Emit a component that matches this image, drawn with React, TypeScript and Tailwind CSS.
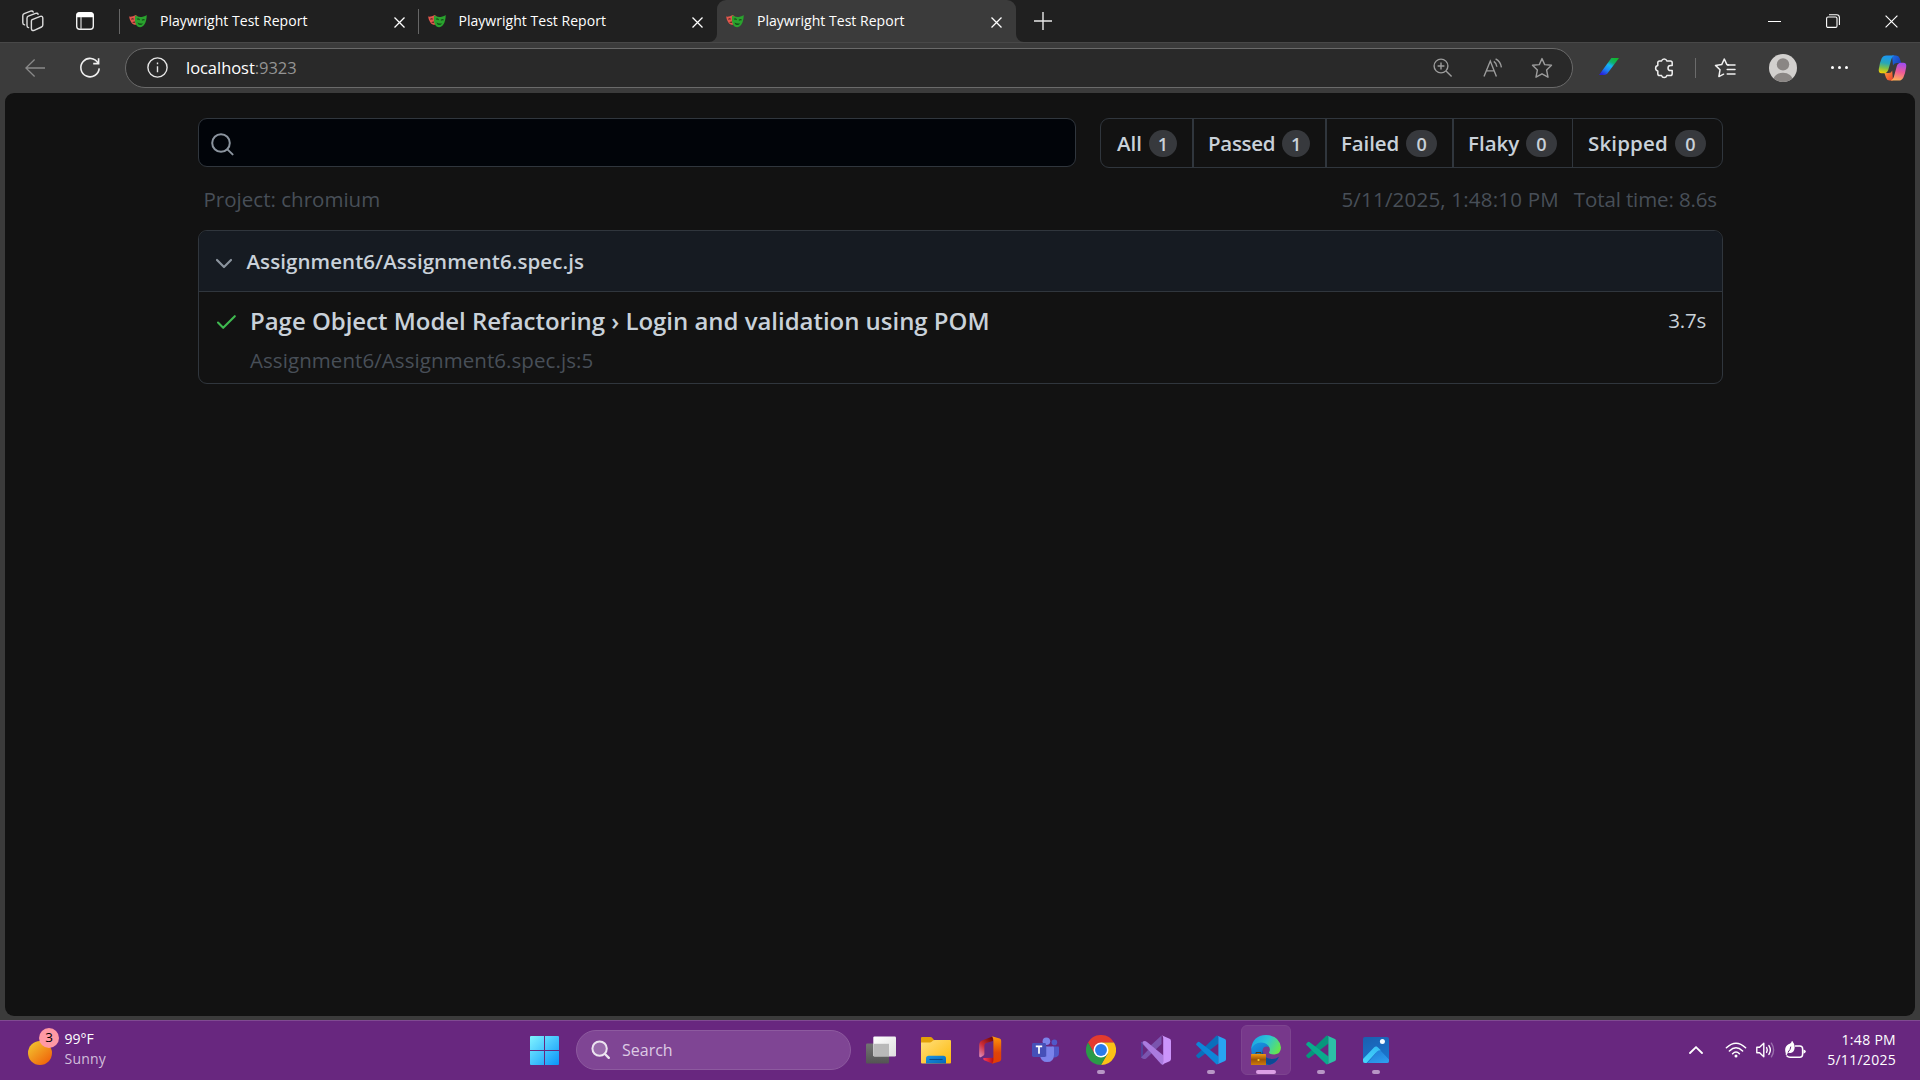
import React from "react";

/* ---------- Browser icons ---------- */

function Masks() {
  return (
    <svg width="18" height="16" viewBox="0 0 18 16" className="shrink-0">
      <path d="M0.2 3.6 C2.4 4 4.6 3.2 6.4 2 L8.4 3 L8.4 11.6 C6 12.2 3.6 11.4 2.2 9.2 C1.1 7.4 0.4 5.6 0.2 3.6Z" fill="#e2574c" />
      <path d="M2.4 6.4 Q3.5 5.3 4.6 6.2" stroke="#4a2422" strokeWidth="1.1" fill="none" />
      <path d="M3.2 9.8 Q4.2 8.2 6 8.4 V10Z" fill="#6b2a26" />
      <path d="M6.2 2.6 C9.8 4.6 13.8 4.4 17.7 1.9 C17.7 5.6 17 9.2 15.2 11.8 C13.4 14.4 10.6 15 8.3 13.2 C6 11.4 5.6 6.8 6.2 2.6Z" fill="#2aa32e" />
      <path d="M8 6.3 Q9.4 5.3 10.6 6.9 M12.9 7.3 Q14.4 6 15.6 7.2" stroke="#15511a" strokeWidth="1.1" fill="none" />
      <path d="M8.4 9.4 Q11 10.8 14.2 10.2 Q12.6 12.6 10.6 12 Q8.9 11.4 8.4 9.4Z" fill="#15511a" />
    </svg>
  );
}

function CloseX({ size = 11, w = 1.3 }: { size?: number; w?: number }) {
  return (
    <svg width={size} height={size} viewBox="0 0 11 11" className="shrink-0">
      <path d="M0.5 0.5 L10.5 10.5 M10.5 0.5 L0.5 10.5" stroke="#fff" strokeWidth={w} />
    </svg>
  );
}

function Workspaces() {
  return (
    <svg width="24" height="24" viewBox="0 0 24 24" fill="none" stroke="#dcdcdc" strokeWidth="1.4" strokeLinejoin="round" strokeLinecap="round">
      <path d="M11.2 10.6 L19.3 7.4 Q21.8 6.7 21.8 9.2 V16 Q21.8 17.4 20.5 18 L13.2 21.3 Q10.6 22.2 10.4 19.6 V12 Q10.4 11 11.2 10.6Z" />
      <path d="M7.6 18.6 Q6 18.4 6 16.6 V9.2 Q6 7.8 7.3 7.2 L14.6 4.4 Q16.6 3.7 17.1 5.3" />
      <path d="M3.6 15.9 Q1.8 15.6 1.8 13.8 V6.8 Q1.8 5.2 3.2 4.6 L9.6 2.2 Q11.6 1.5 12.2 3" />
    </svg>
  );
}

function TabActions() {
  return (
    <svg width="20" height="20" viewBox="0 0 20 20">
      <rect x="1.7" y="1.7" width="16.6" height="16.6" rx="3" fill="none" stroke="#f0f0f0" strokeWidth="1.4" />
      <path d="M1.5 6.3 V4 Q1.5 1.2 4.3 1.2 H15.7 Q18.5 1.2 18.5 4 V6.3Z" fill="#fff" />
      <path d="M6 6 V18" stroke="#c8c8c8" strokeWidth="1.3" />
    </svg>
  );
}

function Tab({ active = false }: { active?: boolean }) {
  return (
    <div
      className={
        active
          ? "relative flex h-[42px] w-[299px] items-center rounded-t-[9px] bg-[#3b3b3b] pr-[14px] pl-[9px]"
          : "flex h-[42px] w-[298.5px] items-center pr-[14px] pl-[9px]"
      }
    >
      {active && (
        <>
          <svg width="8" height="8" viewBox="0 0 8 8" className="absolute bottom-0 -left-2">
            <path d="M8 0 V8 H0 A8 8 0 0 0 8 0Z" fill="#3b3b3b" />
          </svg>
          <svg width="8" height="8" viewBox="0 0 8 8" className="absolute -right-2 bottom-0">
            <path d="M0 0 V8 H8 A8 8 0 0 1 0 0Z" fill="#3b3b3b" />
          </svg>
        </>
      )}
      <Masks />
      <span className="ml-[13px] flex-1 text-[14px] leading-5 tracking-[0.03px] whitespace-nowrap text-white">Playwright Test Report</span>
      <span className="mt-[2px] flex">
        <CloseX />
      </span>
    </div>
  );
}

function TabStrip() {
  return (
    <div className="flex h-[42px] items-center bg-[#202020]">
      <div className="flex w-[119px] items-center pl-[21px]">
        <Workspaces />
        <span className="ml-[30px]">
          <TabActions />
        </span>
      </div>
      <span className="h-[25px] w-px bg-[#666]" />
      <Tab />
      <span className="-ml-px h-[25px] w-px bg-[#666]" />
      <Tab />
      <Tab active />
      <svg width="18" height="18" viewBox="0 0 18 18" className="ml-[17.5px]">
        <path d="M0 9 H18 M9 0 V18" stroke="#e8e8e8" strokeWidth="1.4" />
      </svg>
      <div className="ml-auto flex items-center gap-[45px] pr-[22px]">
        <span className="h-px w-[13px] bg-white" />
        <svg width="14" height="14" viewBox="0 0 14 14" fill="none" stroke="#fff" strokeWidth="1.1">
          <rect x="0.6" y="3" width="10.4" height="10.4" rx="1.4" />
          <path d="M3 0.7 H10.6 Q13.4 0.7 13.4 3.5 V11" />
        </svg>
        <CloseX size={13} w={1} />
      </div>
    </div>
  );
}

function Copilot() {
  return (
    <svg width="29" height="28" viewBox="0 0 29 28">
      <defs>
        <linearGradient id="cpA" x1="0.3" y1="0" x2="0.15" y2="1">
          <stop offset="0" stopColor="#1c96f0" />
          <stop offset="0.4" stopColor="#27a7b8" />
          <stop offset="0.68" stopColor="#7cc04a" />
          <stop offset="1" stopColor="#ffd200" />
        </linearGradient>
        <linearGradient id="cpB" x1="0.6" y1="0" x2="0.4" y2="1">
          <stop offset="0" stopColor="#a14cf0" />
          <stop offset="0.5" stopColor="#ee5a96" />
          <stop offset="1" stopColor="#ffb056" />
        </linearGradient>
        <linearGradient id="cpC" x1="0" y1="0" x2="1" y2="0.6">
          <stop offset="0" stopColor="#1a6fe8" />
          <stop offset="1" stopColor="#1f3fb8" />
        </linearGradient>
        <linearGradient id="cpD" x1="0" y1="0" x2="1" y2="1">
          <stop offset="0" stopColor="#ffa03a" />
          <stop offset="1" stopColor="#e8402e" />
        </linearGradient>
      </defs>
      <path d="M14 1.5 H18 Q20.8 1.5 21.7 4.3 L23.2 9 H18.6 Q15.8 9 15 11.6Z" fill="url(#cpC)" />
      <path d="M15 26.5 H11.6 Q8.8 26.5 8 23.8 L6.4 19 H10.6 Q13.4 19 14.2 16.4Z" fill="url(#cpD)" />
      <path d="M8.4 1.5 H16.6 Q14.4 1.8 13.4 5 L10.4 15.6 Q9.4 19.2 6 19.2 H3.6 Q0.2 19.2 0.8 15 Q1.6 9 3.6 4.6 Q5 1.5 8.4 1.5Z" fill="url(#cpA)" />
      <path d="M20.6 26.5 H12.6 Q14.9 26.2 15.8 23 L18.7 12.4 Q19.7 8.8 23 8.8 H25.4 Q28.8 8.8 28.2 13 Q27.4 19 25.4 23.4 Q24 26.5 20.6 26.5Z" fill="url(#cpB)" />
    </svg>
  );
}

function Toolbar() {
  return (
    <div className="flex h-[51px] items-center border-t border-[#484848] bg-[#3b3b3b] pb-px">
      <div className="flex w-[70px] justify-center">
        <svg width="20" height="18" viewBox="0 0 20 18" fill="none" stroke="#8a8a8a" strokeWidth="1.3">
          <path d="M20 9 H0.8 M9.6 0.5 L0.9 9 L9.6 17.5" />
        </svg>
      </div>
      <div className="flex w-[55px] pl-[9px]">
        <svg width="22" height="22" viewBox="0 0 22 22" fill="none" stroke="#f0f0f0" strokeWidth="1.6">
          <path d="M19 6 A9.2 9.2 0 1 0 20.2 11.4" />
          <path d="M19.6 1.2 V6.6 H14.2" />
        </svg>
      </div>
      <div className="flex h-10 w-[1448px] items-center rounded-full border border-[#6a6a6a] bg-[#292929] pl-[21px]">
        <svg width="21" height="21" viewBox="0 0 21 21" fill="none" stroke="#e6e6e6" strokeWidth="1.4">
          <circle cx="10.5" cy="10.5" r="9.6" />
          <path d="M10.5 9.2 V15.2 M10.5 5.6 V7.3" />
        </svg>
        <span className="ml-[18px] text-[16.5px] leading-6 tracking-[-0.04px] text-white">
          localhost<span className="text-[#949494]">:9323</span>
        </span>
        <div className="ml-auto flex items-center pr-[19px]">
          <svg width="20" height="20" viewBox="0 0 20 20" fill="none" stroke="#9c9c9c" strokeWidth="1.4">
            <circle cx="8" cy="8" r="6.9" />
            <path d="M13 13 L18.6 18.6 M8 4.6 V11.4 M4.6 8 H11.4" />
          </svg>
          <svg width="21" height="20" viewBox="0 0 21 20" fill="none" stroke="#9c9c9c" strokeWidth="1.4" className="ml-[30px]">
            <path d="M1 18.4 L7.3 3 L13.4 18.4 M3.2 12.9 H11.2" />
            <path d="M10.8 3.4 Q13.6 5.3 13.9 8.8 M12.6 0.9 Q17.6 3.5 18.4 9.4" />
          </svg>
          <svg width="22" height="22" viewBox="0 0 22 22" fill="none" stroke="#9c9c9c" strokeWidth="1.4" strokeLinejoin="round" className="ml-[27px]">
            <path d="M11 1.6 L13.7 7.6 L20.5 8.3 L15.6 13 L17 20.2 L11 16.8 L5 20.2 L6.4 13 L1.5 8.3 L8.3 7.6Z" />
          </svg>
        </div>
      </div>
      <div className="flex w-[72px] justify-center pb-[2px]">
        <svg width="20" height="17" viewBox="0 0 20 17">
          <defs>
            <linearGradient id="slash" x1="0.85" y1="0" x2="0.2" y2="1">
              <stop offset="0" stopColor="#12b828" />
              <stop offset="0.28" stopColor="#10b070" />
              <stop offset="0.45" stopColor="#16b4f4" />
              <stop offset="0.7" stopColor="#1a86f6" />
              <stop offset="1" stopColor="#2a1fd8" />
            </linearGradient>
          </defs>
          <path d="M12.4 0 H20 L8.4 15.6 Q7.2 17 5.4 17 H0Z" fill="url(#slash)" />
        </svg>
      </div>
      <div className="flex w-[38px] justify-center">
        <svg width="20" height="22" viewBox="0 0 20 22" fill="none" stroke="#f0f0f0" strokeWidth="1.5" strokeLinejoin="round">
          <path d="M5.6 3.9 H7.6 A2.7 2.7 0 0 1 12.8 3.9 H16.4 Q18.2 3.9 18.2 5.7 V8.4 H16.6 A2.6 2.6 0 0 0 16.6 13.6 H18.2 V16.8 Q18.2 18.6 16.4 18.6 H12.8 A2.7 2.7 0 0 1 7.6 18.6 H5.6 Q3.8 18.6 3.8 16.8 V13.9 A2.7 2.7 0 0 1 3.8 8.6 V5.7 Q3.8 3.9 5.6 3.9Z" />
        </svg>
      </div>
      <div className="flex w-6 justify-center">
        <span className="h-5 w-px bg-[#6b6b6b]" />
      </div>
      <div className="flex w-9 justify-center">
        <svg width="22" height="22" viewBox="0 0 22 22" fill="none" stroke="#f0f0f0" strokeWidth="1.5" strokeLinejoin="round" strokeLinecap="round">
          <path d="M14.6 7.9 L12.9 7.6 L10.3 2 L7.7 7.6 L1.5 8.4 L6 12.8 L4.9 19.6 L9.6 17.2" />
          <path d="M13.6 7.9 H21 M13.2 12.6 H21 M13.2 17 H21" />
        </svg>
      </div>
      <div className="flex w-20 justify-center">
        <svg width="28" height="28" viewBox="0 0 28 28">
          <defs>
            <clipPath id="avatarClip">
              <circle cx="14" cy="14" r="14" />
            </clipPath>
          </defs>
          <g clipPath="url(#avatarClip)">
            <rect width="28" height="28" fill="#d2d0ce" />
            <circle cx="14" cy="10.4" r="6.2" fill="#8a8684" />
            <ellipse cx="14" cy="26" rx="9.8" ry="7.2" fill="#8a8684" />
          </g>
        </svg>
      </div>
      <div className="flex w-[33px] items-center justify-center gap-1">
        <span className="size-[3px] rounded-full bg-white" />
        <span className="size-[3px] rounded-full bg-white" />
        <span className="size-[3px] rounded-full bg-white" />
      </div>
      <div className="ml-[22px]">
        <Copilot />
      </div>
    </div>
  );
}

/* ---------- Test report ---------- */

function Badge({ wide = false, children }: { wide?: boolean; children: string }) {
  return (
    <span
      className={
        wide
          ? "mt-px flex h-[27px] w-[31px] items-center justify-center rounded-full bg-[#37393d] pt-px text-[18px] leading-none font-semibold text-[#c9d1d9]"
          : "mt-px flex h-[27px] w-[28px] items-center justify-center rounded-full bg-[#37393d] pt-px text-[18px] leading-none font-semibold text-[#c9d1d9]"
      }
    >
      {children}
    </span>
  );
}

function Report() {
  return (
    <main className="h-[923px] rounded-[9px] bg-[#121212] pt-[25px] pr-[192px] pl-[193px] text-[20.5px]">
      <div className="flex items-start">
        <div className="flex h-[49px] w-[878px] items-center rounded-[9px] border border-[#30363d] bg-[#010409] pl-[12px]">
          <svg width="24" height="24" viewBox="0 0 24 24" fill="none" stroke="#8b949e" strokeWidth="2" strokeLinecap="round" className="mt-[5px]">
            <circle cx="10" cy="10" r="8.8" />
            <path d="M16.4 16.4 L21.6 21.4" />
          </svg>
        </div>
        <nav className="ml-[24px] flex h-[50px] w-[623px] items-center rounded-[9px] border border-[#30363d] font-semibold text-[#c9d1d9]">
          <a className="flex h-full w-[93px] items-center justify-between border-r-2 border-[#30363d] pr-[15px] pl-4">
            All <Badge>1</Badge>
          </a>
          <a className="flex h-full w-[133px] items-center justify-between border-r-2 border-[#30363d] pr-[15px] pl-[14px] tracking-[-0.3px]">
            Passed <Badge>1</Badge>
          </a>
          <a className="flex h-full w-[127px] items-center justify-between border-r-2 border-[#30363d] pr-[15px] pl-[14px] tracking-[-0.1px]">
            Failed <Badge wide>0</Badge>
          </a>
          <a className="flex h-full w-[119px] items-center justify-between border-r border-[#30363d] pr-[15px] pl-[14px]">
            Flaky <Badge wide>0</Badge>
          </a>
          <a className="flex h-full flex-1 items-center justify-between pr-4 pl-[15px] tracking-[0.15px]">
            Skipped <Badge wide>0</Badge>
          </a>
        </nav>
      </div>

      <div className="mt-[15px] flex h-8 items-center pr-[6px] pl-[5.5px] leading-8 text-[#484f58]">
        <span className="tracking-[0.02px]">Project: chromium</span>
        <span className="ml-auto tracking-[0.2px]">5/11/2025, 1:48:10 PM</span>
        <span className="ml-[15px] tracking-[-0.12px]">Total time: 8.6s</span>
      </div>

      <section className="mt-[15px] h-[154px] overflow-hidden rounded-[9px] border border-[#30363d]">
        <header className="flex h-[61px] items-center border-b border-[#30363d] bg-[#161b22] pl-[15.5px] font-semibold text-[#c9d1d9]">
          <svg width="18" height="12" viewBox="0 0 18 12" fill="none" stroke="#8b949e" strokeWidth="2.2" strokeLinecap="round" strokeLinejoin="round" className="mt-[6px]">
            <path d="M2 2 L9 9 L16 2" />
          </svg>
          <span className="ml-[14px] pt-px tracking-[0.07px]">Assignment6/Assignment6.spec.js</span>
        </header>
        <div className="flex pt-[11px] pr-[16px] pl-[17px]">
          <svg width="21" height="16" viewBox="0 0 21 16" fill="none" stroke="#3fb950" strokeWidth="2.1" strokeLinecap="round" strokeLinejoin="round" className="mt-[11px]">
            <path d="M2 8.6 L7.2 13.8 L18.8 2.2" />
          </svg>
          <div className="ml-[13px] flex flex-col">
            <span className="text-[24px] leading-9 font-semibold tracking-[-0.03px] text-[#c9d1d9]">
              Page Object Model Refactoring › Login and validation using POM
            </span>
            <span className="mt-[4.5px] leading-8 tracking-[0.07px] text-[#484f58]">Assignment6/Assignment6.spec.js:5</span>
          </div>
          <span className="ml-auto leading-[35px] tracking-[-0.2px] text-[#c9d1d9]">3.7s</span>
        </div>
      </section>
    </main>
  );
}

/* ---------- Taskbar icons ---------- */

function StartIcon() {
  return (
    <svg width="29" height="29" viewBox="0 0 29 29">
      <defs>
        <linearGradient id="win" x1="0" y1="0" x2="1" y2="1">
          <stop offset="0" stopColor="#80f4ff" />
          <stop offset="0.5" stopColor="#45c4fd" />
          <stop offset="1" stopColor="#0a94f8" />
        </linearGradient>
      </defs>
      <path d="M1 0 H14 V14 H0 V1 Q0 0 1 0Z M15 0 H28 Q29 0 29 1 V14 H15Z M0 15 H14 V29 H1 Q0 29 0 28Z M15 15 H29 V28 Q29 29 28 29 H15Z" fill="url(#win)" />
    </svg>
  );
}

function TaskView() {
  return (
    <svg width="30" height="28" viewBox="0 0 30 28">
      <defs>
        <linearGradient id="tvW" x1="0" y1="0" x2="1" y2="1">
          <stop offset="0" stopColor="#ffffff" />
          <stop offset="1" stopColor="#dedede" />
        </linearGradient>
        <linearGradient id="tvG" x1="0" y1="0" x2="0" y2="1">
          <stop offset="0" stopColor="#737373" />
          <stop offset="1" stopColor="#545454" />
        </linearGradient>
      </defs>
      <rect x="0" y="7.5" width="23" height="20" rx="1.2" fill="url(#tvG)" />
      <rect x="7.3" y="0.5" width="22.7" height="20" rx="1.2" fill="url(#tvW)" />
      <path d="M7.8 7.8 H23 V20 H7.8Z" fill="#b9b9b9" />
    </svg>
  );
}

function Explorer() {
  return (
    <svg width="30" height="27" viewBox="0 0 30 27">
      <defs>
        <linearGradient id="fold" x1="0" y1="0" x2="1" y2="1">
          <stop offset="0" stopColor="#ffdf7c" />
          <stop offset="1" stopColor="#fdb90a" />
        </linearGradient>
        <linearGradient id="foldB" x1="0" y1="0" x2="1" y2="1">
          <stop offset="0" stopColor="#1a94e2" />
          <stop offset="1" stopColor="#0565b8" />
        </linearGradient>
      </defs>
      <path d="M0 1 Q0 0 1 0 H9.5 Q10.5 0 11.4 0.9 L13 3 V8 H0Z" fill="#e3a008" />
      <path d="M0 5.6 H8.8 Q10 5.6 11 4.6 L12 3.6 Q12.6 3 13.6 3 H29 Q30 3 30 4 V25.5 Q30 26.5 29 26.5 H1 Q0 26.5 0 25.5Z" fill="url(#fold)" />
      <path d="M5 26.5 V21.5 Q5 18.8 7.7 18.8 H22.3 Q25 18.8 25 21.5 V26.5Z" fill="url(#foldB)" />
      <path d="M8.4 22.5 H21.6" stroke="#064a8a" strokeWidth="1.1" />
    </svg>
  );
}

function Office() {
  return (
    <svg width="24" height="28" viewBox="0 0 24 28" className="mr-[2px]">
      <defs>
        <linearGradient id="offR" x1="0" y1="0" x2="0" y2="1">
          <stop offset="0" stopColor="#ff9a0a" />
          <stop offset="0.6" stopColor="#e04408" />
          <stop offset="1" stopColor="#e23c04" />
        </linearGradient>
        <linearGradient id="offL" x1="0.7" y1="0" x2="0.1" y2="1">
          <stop offset="0" stopColor="#7c0a06" />
          <stop offset="0.5" stopColor="#cc2c38" />
          <stop offset="1" stopColor="#e08ab8" />
        </linearGradient>
        <linearGradient id="offB" x1="0" y1="0" x2="1" y2="0">
          <stop offset="0" stopColor="#ff3a60" />
          <stop offset="1" stopColor="#a80a08" />
        </linearGradient>
      </defs>
      <path d="M14.6 0.4 L4.6 4.2 Q1.2 5.4 1.2 9 V19.4 Q1.2 22.4 3.6 20.8 L5.6 19.6 Q6.4 19 6.4 17.8 V9.4 Q6.4 7.6 8.2 7 L15 5Z" fill="url(#offL)" />
      <path d="M5.4 22 Q4.8 23.6 6.2 24.2 L14.8 27.8 L17 21.8Z" fill="url(#offB)" />
      <path d="M13.8 0.2 L21.6 2.6 Q23.2 3.2 23.2 4.8 V23.2 Q23.2 24.8 21.6 25.4 L14 27.8 Q15.4 26.8 15.4 24 V4.2 Q15.4 1.4 13.8 0.2Z" fill="url(#offR)" />
    </svg>
  );
}

function Teams() {
  return (
    <svg width="27" height="26" viewBox="0 0 27 26" className="mr-px">
      <circle cx="22.4" cy="5.4" r="2.8" fill="#5059c9" />
      <path d="M20 9.4 H26.2 Q27 9.4 27 10.2 V15.6 Q27 20.4 22.6 20.4 Q20 20.4 18 18Z" fill="#5059c9" />
      <circle cx="14.4" cy="4.2" r="3.8" fill="#7b83eb" />
      <path d="M9 9.4 H21 Q22 9.4 22 10.4 V17.4 Q22 25 15 25 Q8.8 25 8 18.4Z" fill="#7b83eb" />
      <path d="M7.5 9.4 H14.4 V19.6 H9 Z" fill="#5b62c4" />
      <rect x="0" y="6" width="14" height="14" rx="1.4" fill="#4650b8" />
      <path d="M3.8 9.4 H10.2 M7 9.4 V16.8" stroke="#fff" strokeWidth="1.7" />
    </svg>
  );
}

function Chrome() {
  return (
    <svg width="30" height="30" viewBox="0 0 48 48">
      <path d="M24 12 H44.8 A24 24 0 0 0 3.2 12 L13.6 30 Z" fill="#e33b2e" />
      <path d="M34.4 30 L24 48 A24 24 0 0 0 44.8 12 H24Z" fill="#fbc116" />
      <path d="M13.6 30 L3.2 12 A24 24 0 0 0 24 48 L34.4 30Z" fill="#2a9a48" />
      <circle cx="24" cy="24" r="12" fill="#fff" />
      <circle cx="24" cy="24" r="9.5" fill="#2a7bea" />
    </svg>
  );
}

function VisualStudio() {
  return (
    <svg width="30" height="30" viewBox="0 0 30 30">
      <path d="M0 7.2 L2 6.4 V23.6 L0 22.8Z" fill="#52419a" />
      <path d="M0 7.6 L2.2 6.4 L8 12 L20.5 0.6 V9 L5.2 23.4 Q3.6 24.6 2 23.7 L0 22.4 L7 15Z" fill="#7a54ae" />
      <path d="M2 6.4 Q4 5.4 6 7 L22.5 20.6 V29.8 Q21 30 19.8 28.8 L2.6 9.4 Q1.6 8 2 6.4Z" fill="#aa7bdf" />
      <path d="M20.6 0.2 L28.6 3.8 Q30 4.4 30 6 V24 Q30 25.6 28.6 26.2 L20.6 29.8 Q22.2 29 22.2 27 V3 Q22.2 1 20.6 0.2Z" fill="#cb94fb" />
    </svg>
  );
}

function Code({ back, front, panel }: { back: string; front: string; panel: string }) {
  return (
    <svg width="30" height="30" viewBox="0 0 30 30">
      <path d="M0.4 20 L20.6 0.4 L22.5 1.5 V8.4 L3.4 23 Q2.6 23.5 1.9 22.9 L0.5 21.6 Q-0.2 20.8 0.4 20Z" fill={back} />
      <path d="M0.4 10 L20.6 29.6 L22.5 28.5 V21.6 L3.4 7 Q2.6 6.5 1.9 7.1 L0.5 8.4 Q-0.2 9.2 0.4 10Z" fill={front} />
      <path d="M20.4 0.3 L29 4 Q30 4.5 30 5.8 V24.2 Q30 25.5 29 26 L20.4 29.7 Q22.4 29.6 22.4 28 V2 Q22.4 0.6 20.4 0.3Z" fill={panel} />
    </svg>
  );
}

function Edge() {
  return (
    <svg width="30" height="30" viewBox="0 0 30 30">
      <defs>
        <linearGradient id="edT" x1="0" y1="0.2" x2="1" y2="0.6">
          <stop offset="0" stopColor="#1ba2e6" />
          <stop offset="0.5" stopColor="#2cc6d4" />
          <stop offset="1" stopColor="#66e64c" />
        </linearGradient>
        <linearGradient id="edL" x1="0" y1="0" x2="0.6" y2="1">
          <stop offset="0" stopColor="#1a9ae4" />
          <stop offset="1" stopColor="#0f5db8" />
        </linearGradient>
        <linearGradient id="case" x1="0" y1="0" x2="0" y2="1">
          <stop offset="0" stopColor="#f09a10" />
          <stop offset="0.5" stopColor="#9c5408" />
          <stop offset="1" stopColor="#d07c0a" />
        </linearGradient>
      </defs>
      <path d="M0.2 14 Q2 6 10 6.6 Q17 7.4 18 12 Q13 10 11.6 14.6 Q11 22 20 24.4 Q24.6 25.2 28 22 Q24.4 30 15.4 30 Q1 29.6 0.2 14Z" fill="url(#edL)" />
      <path d="M0.2 14 Q1.4 0.4 15 0 Q28.6 0.4 30 12.6 Q29.8 19.2 23.4 19.4 Q18.4 19.4 18 17.8 Q17.9 17.2 18.6 16.2 Q19.6 13.6 17.4 10.8 Q14.4 7.6 10 7.6 Q3 7.8 0.2 14Z" fill="url(#edT)" />
      <path d="M12 15 Q11.4 21.6 17.6 23.6 Q23.6 25.2 28 21.8 Q24.8 28.6 18 29.8 Q8 26 12 15Z" fill="#0d4a94" />
      <path d="M5 18.8 V17.6 H10 V18.8" fill="none" stroke="#5a3206" strokeWidth="1" />
      <rect x="0" y="19" width="15" height="11" rx="0.6" fill="url(#case)" />
      <circle cx="7.5" cy="25" r="1.1" fill="#ffd62e" />
    </svg>
  );
}

function Photos() {
  return (
    <svg width="26" height="26" viewBox="0 0 26 26">
      <defs>
        <linearGradient id="phBg" x1="0" y1="0" x2="0.4" y2="1">
          <stop offset="0" stopColor="#1a5fb0" />
          <stop offset="1" stopColor="#1a74cc" />
        </linearGradient>
        <linearGradient id="phM" x1="0.8" y1="0" x2="0.2" y2="1">
          <stop offset="0" stopColor="#35bdf4" />
          <stop offset="1" stopColor="#46d4fb" />
        </linearGradient>
        <linearGradient id="phR" x1="0" y1="0" x2="0.4" y2="1">
          <stop offset="0" stopColor="#1b74cc" />
          <stop offset="1" stopColor="#2d9cee" />
        </linearGradient>
        <clipPath id="phClip">
          <rect width="26" height="26" rx="2" />
        </clipPath>
      </defs>
      <g clipPath="url(#phClip)">
        <rect width="26" height="26" fill="url(#phBg)" />
        <path d="M13 9 L17 13 L28 24.5 V28 H3 L13 16Z" fill="url(#phR)" />
        <path d="M-1 23 L11 10.4 Q13 8.4 15 10.4 L17.8 13.2 Q15.6 13 14 14.6 L3 26.6 H-1Z" fill="url(#phM)" />
        <circle cx="19.4" cy="4.6" r="2.5" fill="#f4fbff" />
      </g>
    </svg>
  );
}

type Mark = "none" | "running" | "focused";

function TaskItem({ mark = "none", children }: { mark?: Mark; children: React.ReactNode }) {
  return (
    <div
      className={
        mark === "focused"
          ? "relative mx-[2.5px] flex size-[50px] items-center justify-center rounded-[6px] border border-[#7d448f] bg-[#77388b]"
          : "relative mx-[2.5px] flex size-[50px] items-center justify-center"
      }
    >
      {children}
      {mark === "running" && <span className="absolute bottom-[1px] h-1 w-2 rounded-full bg-[#b896c6]" />}
      {mark === "focused" && <span className="absolute bottom-0 h-1 w-5 rounded-full bg-[#dd9fe6]" />}
    </div>
  );
}

function Taskbar() {
  return (
    <footer className="flex h-[60px] items-center border-t border-[#804a92] bg-[#68277f] pb-px text-[14px] text-white">
      <div className="flex w-[530px] items-center pb-[2px] pl-[28px]">
        <div className="relative h-[34px] w-[31px]">
          <svg width="24" height="24" viewBox="0 0 24 24" className="mt-[9px]">
            <defs>
              <linearGradient id="sun" x1="0.1" y1="0.1" x2="0.8" y2="0.9">
                <stop offset="0" stopColor="#f2c12e" />
                <stop offset="1" stopColor="#f0680c" />
              </linearGradient>
            </defs>
            <circle cx="12" cy="12" r="12" fill="url(#sun)" />
          </svg>
          <span className="absolute -top-1 left-[11px] flex size-5 items-center justify-center rounded-full bg-[#ff99a4] text-[13.5px] leading-none text-black">3</span>
        </div>
        <div className="ml-[5.5px] flex flex-col leading-5">
          <span>99°F</span>
          <span className="tracking-[0.2px] text-[#d2bedb]">Sunny</span>
        </div>
      </div>
      <StartIcon />
      <div className="mr-[2.5px] ml-[17px] flex h-10 w-[275px] items-center rounded-full border border-[#8d5a9f] bg-[#7f4594] pl-[14px]">
        <svg width="20" height="20" viewBox="0 0 20 20" fill="none" stroke="#ece4f0" strokeWidth="2" strokeLinecap="round">
          <circle cx="8.6" cy="8.6" r="7.2" fill="#9a6cac" />
          <path d="M14 14 L17.8 17.8" strokeWidth="2.4" />
        </svg>
        <span className="ml-[11px] text-[16px] text-[#ddcbe4]">Search</span>
      </div>
      <TaskItem>
        <TaskView />
      </TaskItem>
      <TaskItem>
        <Explorer />
      </TaskItem>
      <TaskItem>
        <Office />
      </TaskItem>
      <TaskItem>
        <Teams />
      </TaskItem>
      <TaskItem mark="running">
        <Chrome />
      </TaskItem>
      <TaskItem>
        <VisualStudio />
      </TaskItem>
      <TaskItem mark="running">
        <Code back="#0a6fbb" front="#0d86d8" panel="#28a4f2" />
      </TaskItem>
      <TaskItem mark="focused">
        <Edge />
      </TaskItem>
      <TaskItem mark="running">
        <Code back="#06967c" front="#0aac8c" panel="#2cc0a6" />
      </TaskItem>
      <TaskItem mark="running">
        <Photos />
      </TaskItem>
      <div className="ml-auto flex items-center pr-[24px] pb-px">
        <svg width="14" height="8" viewBox="0 0 14 8" fill="none" stroke="#fff" strokeWidth="1.8" strokeLinecap="round">
          <path d="M1 7 L7 1.2 L13 7" />
        </svg>
        <svg width="22" height="18" viewBox="0 0 22 18" fill="none" stroke="#fff" strokeWidth="1.5" strokeLinecap="round" className="ml-[22px]">
          <path d="M1.4 6.8 Q11 -2.4 20.6 6.8 M4.4 10 Q11 3.6 17.6 10 M7.6 12.8 Q11 9.4 14.4 12.8" />
          <circle cx="11" cy="15" r="1.5" fill="#fff" stroke="none" />
        </svg>
        <svg width="20" height="18" viewBox="0 0 20 18" fill="none" stroke="#fff" strokeWidth="1.4" strokeLinecap="round" strokeLinejoin="round" className="ml-[9px]">
          <path d="M0.8 6.2 H3.6 L7.8 2.2 V15.8 L3.6 11.8 H0.8Z" />
          <path d="M10.6 6.6 Q12 9 10.6 11.4 M12.9 4.6 Q15.8 9 12.9 13.4" />
          <path d="M15.4 2.2 Q19.8 9 15.4 15.8" stroke="#9a6fac" />
        </svg>
        <svg width="21" height="18" viewBox="0 0 21 18" className="ml-[9px]">
          <path d="M10.4 5 H14.8 Q17.6 5 17.6 7.8 V13.2 Q17.6 16.2 14.8 16.2 H5 Q3 16.2 2 15" fill="none" stroke="#fff" strokeWidth="1.5" strokeLinecap="round" />
          <path d="M18.4 8.4 Q20.8 9 20.8 10.6 Q20.8 12.2 18.4 12.8Z" fill="#fff" />
          <path d="M7 -0.4 Q10 3 9.6 7 Q9.2 11.4 5.4 12 Q4 12.2 3 11.6 L1.4 14.4 Q0.2 13.8 0.8 12.6 Q-0.2 9.6 0.4 7 Q1.4 3.6 5.2 2.4 Q6.6 1.6 7 -0.4Z" fill="#fff" />
          <path d="M3 11.2 Q5.6 8.6 5.8 5.6" stroke="#68277f" strokeWidth="1" fill="none" />
        </svg>
        <div className="ml-[21px] flex flex-col items-end leading-5">
          <span className="tracking-[0.3px]">1:48 PM</span>
          <span className="tracking-[0.28px]">5/11/2025</span>
        </div>
      </div>
    </footer>
  );
}

export default function App() {
  return (
    <div className="flex h-[1080px] w-[1920px] flex-col overflow-hidden bg-[#3b3b3b] font-['Open_Sans','Noto_Sans',sans-serif]">
      <TabStrip />
      <Toolbar />
      <div className="h-[927px] bg-[#3b3b3b] px-[5px]">
        <Report />
      </div>
      <Taskbar />
    </div>
  );
}
